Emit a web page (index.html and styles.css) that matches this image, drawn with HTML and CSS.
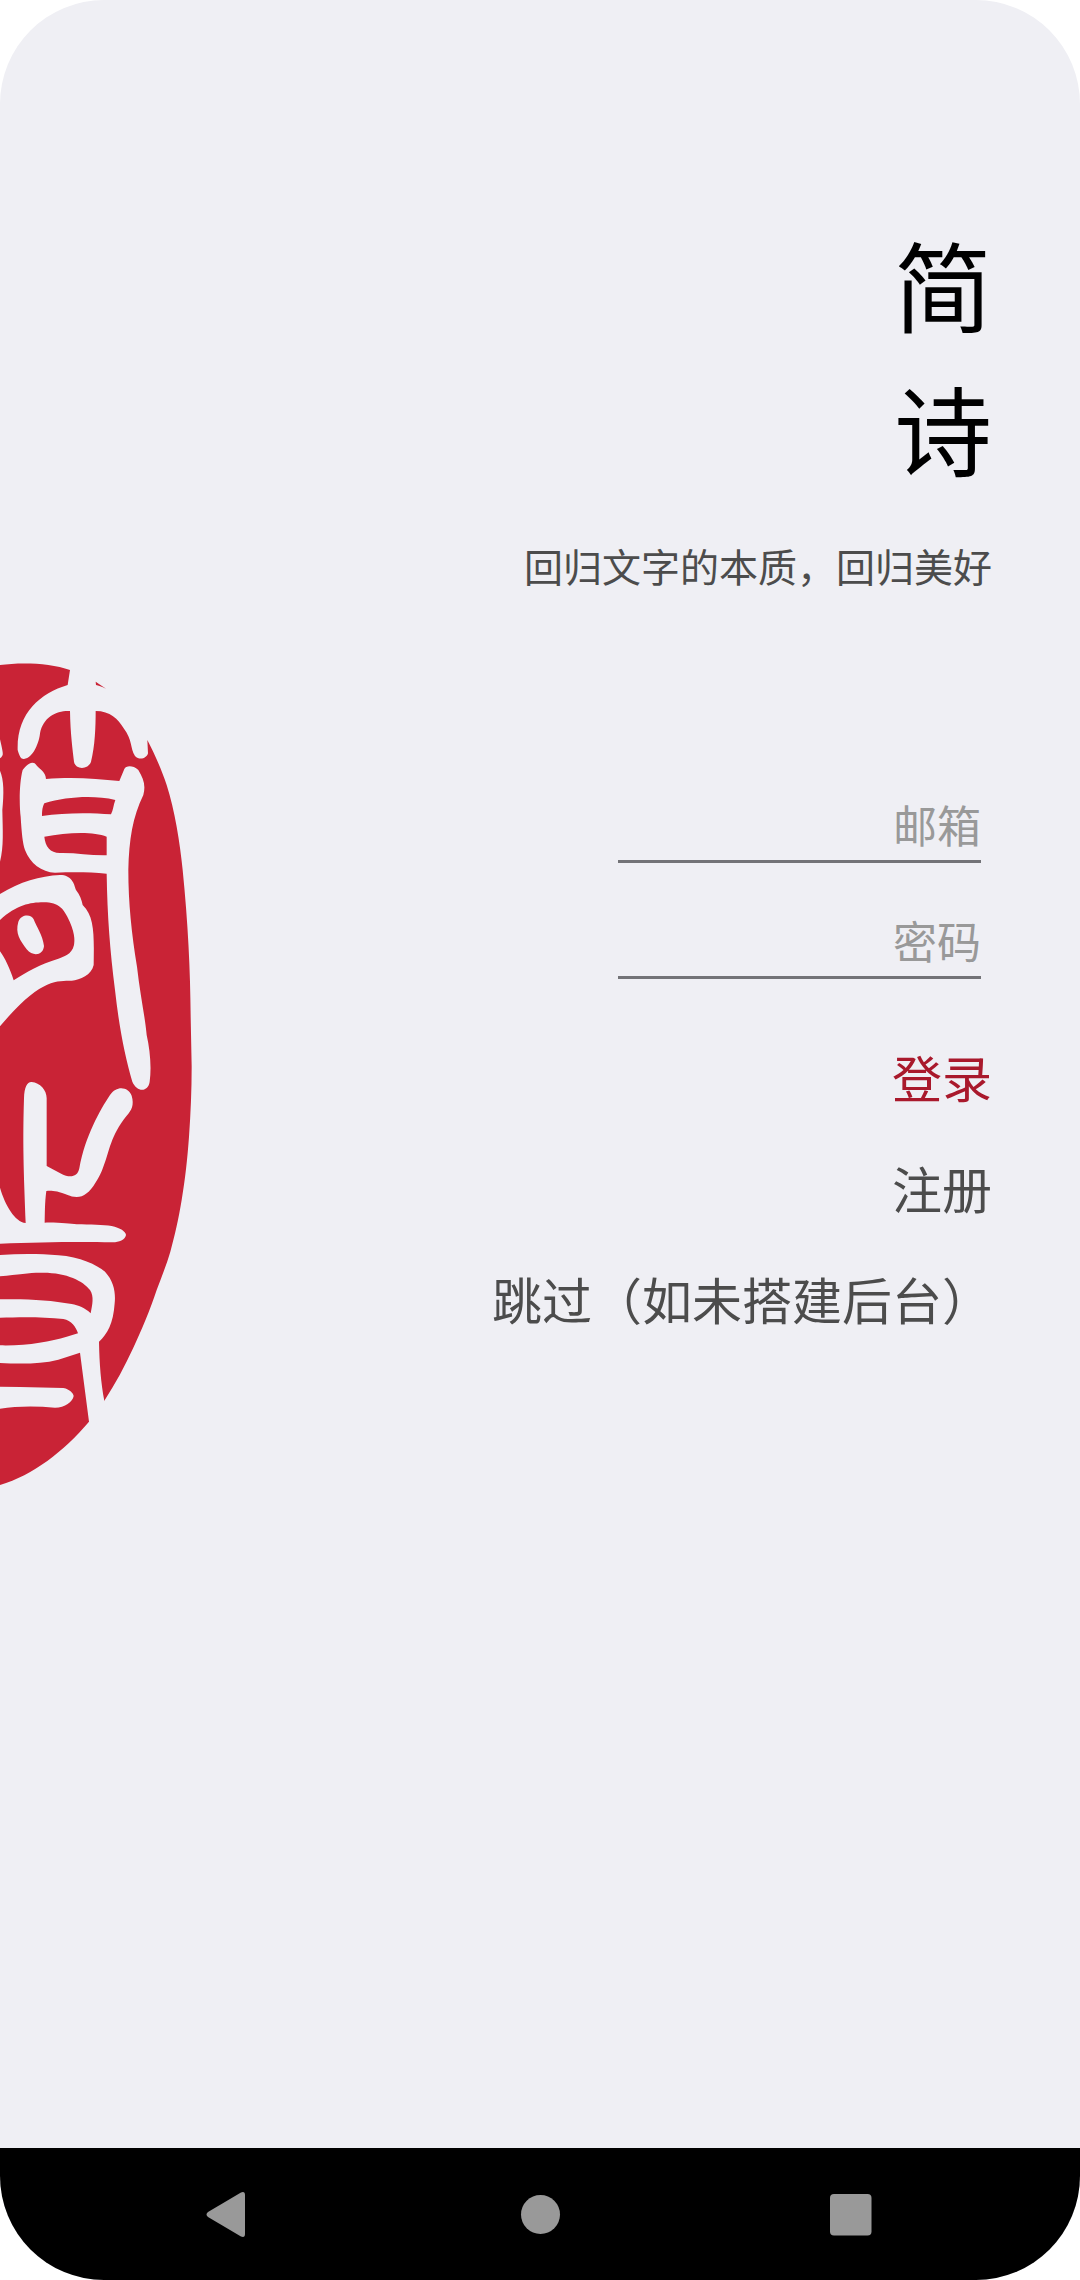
FILE: index.html
```
<!DOCTYPE html>
<html lang="zh-CN">
<head>
<meta charset="utf-8">
<meta name="viewport" content="width=device-width, initial-scale=1">
<title>简诗</title>
<link rel="stylesheet" href="styles.css">
</head>
<body>
<div class="screen">
  <main class="login">
    <svg class="seal" viewBox="0 0 600 2550" aria-hidden="true">
      <!-- oval body of the seal -->
      <path class="ink" d="M0 45C60 37 150 38 210 60L203 105C120 130 50 190 53 300C58 318 63 328 72 327C100 325 118 275 120 250C130 200 170 181 210 183C211 250 218 300 222 335C226 360 265 360 273 335C285 290 287 230 287 183C330 183 355 207 371 235C398 270 390 295 405 318C418 332 440 326 444 310L442 270C468 320 487 366 500 405C524 480 540 580 548 660C564 820 571 960 572 1100C573 1150 574 1200 575 1250C575 1320 572 1390 567 1460C562 1530 555 1590 545 1650C535 1710 525 1755 511 1805C501 1840 485 1880 470 1920C450 1980 425 2040 400 2093C375 2147 345 2203 313 2252L267 2315C190 2405 100 2475 0 2505Z"/>
      <path class="ink" d="M287 95L318 116C305 110 295 107 288 105Z"/>
      <!-- upper character -->
      <path class="paper" d="M0 268C5 290 10 310 8 315C5 322 3 322 0 325Z"/>
      <path class="paper" d="M0 362C12 390 12 430 7 480C8 540 12 590 0 635Z"/>
      <path class="paper" d="M138 387C137 365 115 355 107 343C97 333 85 340 68 360C57 400 58 470 62 500C65 550 68 580 75 600C90 640 125 667 165 668C220 666 270 666 320 671C322 800 330 900 345 1020C357 1130 375 1220 397 1295C412 1329 445 1325 449 1295C455 1250 450 1200 440 1155C435 1100 420 1030 411 950C395 850 385 760 385 660C387 570 398 500 430 435C438 405 430 385 415 360C398 345 378 347 373 357L358 393C290 385 210 380 138 387Z"/>
      <path class="ink" d="M133 460C200 440 280 435 346 450C340 465 340 480 333 493C270 488 190 488 126 498C126 480 128 470 133 460Z"/>
      <path class="ink" d="M133 560C200 547 280 543 320 560L320 616C270 617 230 608 180 609C150 608 136 590 133 560Z"/>
      <path class="paper" d="M0 732C60 695 120 678 180 675C215 675 222 700 228 720C240 735 245 750 248 765C285 800 282 860 281 945C275 975 240 990 215 992C170 993 120 985 0 1129Z"/>
      <path class="ink" d="M0 810C50 765 90 757 130 757C180 757 190 780 202 800C225 845 225 870 222 885C215 915 190 920 175 926C120 943 80 965 41 991C30 955 15 925 0 904Z"/>
      <path class="paper" d="M101 808C95 793 65 790 55 815C45 850 60 870 80 898C100 922 130 915 132 888C128 855 110 832 101 808Z"/>
      <!-- lower character -->
      <path class="paper" d="M0 1613C15 1665 45 1716 77 1719C73 1600 67 1500 72 1345C73 1310 82 1295 95 1296C120 1298 140 1320 140 1345L140 1548L185 1572C205 1582 232 1585 238 1555C255 1460 300 1380 330 1335C350 1305 385 1310 395 1337C403 1365 395 1380 380 1397C330 1460 330 1500 310 1550C300 1580 275 1620 260 1630C240 1648 215 1640 205 1636C170 1622 155 1622 139 1623C134 1660 135 1690 134 1718C180 1717 210 1722 230 1723C270 1724 310 1724 335 1728C360 1733 378 1745 378 1755C375 1770 355 1778 335 1777C250 1775 120 1776 0 1781Z"/>
      <path class="paper" d="M0 1815C60 1811 120 1811 175 1816C240 1820 290 1845 315 1865C343 1895 347 1930 344 1960C340 2020 322 2053 297 2075C298 2140 303 2200 313 2252L322 2300L270 2330L267 2315L240 2108L175 2129C120 2143 60 2142 0 2139Z"/>
      <path class="ink" d="M0 1879C60 1873 90 1867 130 1868C200 1868 250 1893 270 1920C283 1940 277 1965 272 1990C255 1973 235 1966 215 1962C150 1950 80 1946 0 1948Z"/>
      <path class="ink" d="M0 2003C60 2001 130 2000 190 2007C215 2012 227 2030 234 2050L200 2060C150 2075 80 2088 0 2086Z"/>
      <path class="paper" d="M0 2210L60 2211L190 2214C210 2218 220 2230 221 2238C218 2255 195 2273 165 2273C110 2268 50 2268 0 2276Z"/>
    </svg>
    <div class="panel">
      <h1 class="title"><span>简</span><span>诗</span></h1>
      <p class="slogan">回归文字的本质，回归美好</p>
      <form class="form">
        <input class="field" type="email" placeholder="邮箱" aria-label="邮箱">
        <input class="field" type="password" placeholder="密码" aria-label="密码">
        <div class="actions">
          <button class="action primary" type="button">登录</button>
          <button class="action" type="button">注册</button>
          <button class="action" type="button">跳过（如未搭建后台）</button>
        </div>
      </form>
    </div>
  </main>
  <nav class="navbar" aria-label="系统导航">
    <button class="key" type="button" aria-label="返回">
      <svg class="glyph" viewBox="0 0 48 48"><path d="M37 2.500Q41 1 41 5V44Q41 48 37 46.500L4 27Q1 24.500 4 22Z"/></svg>
    </button>
    <button class="key" type="button" aria-label="主页">
      <svg class="glyph" viewBox="0 0 48 48"><circle cx="24.500" cy="24.500" r="19.500"/></svg>
    </button>
    <button class="key" type="button" aria-label="最近任务">
      <svg class="glyph" viewBox="0 0 48 48"><rect x="2" y="4" width="41.500" height="41.500" rx="4"/></svg>
    </button>
  </nav>
</div>
</body>
</html>
```
FILE: styles.css
```
* {
  box-sizing: border-box;
}

body {
  margin: 0;
  background: #fff;
  font-family: "Noto Sans CJK SC", sans-serif;
  color: #4c4c4c;
}

.screen {
  display: flex;
  flex-direction: column;
  min-height: 100vh;
  border-radius: 104px;
  background: #efeff4;
  overflow: hidden;
}

.login {
  flex: 1;
  display: grid;
  grid-template-columns: 200px 1fr;
  align-items: start;
  padding: 210px 88px 0 0;
}

.seal {
  display: block;
  width: 200px;
  margin-top: 440px;
}

.ink {
  fill: #c92336;
}

.paper {
  fill: #efeff4;
}

.panel,
.form,
.actions {
  display: flex;
  flex-direction: column;
  align-items: flex-end;
}

.title {
  margin: 0;
  font-size: 98px;
  line-height: 144px;
  font-weight: 400;
  color: #000;
}

.title span {
  display: block;
}

.slogan {
  margin: 39px 0 0;
  font-size: 39px;
  line-height: 56px;
}

.form {
  gap: 36px;
  margin-top: 190px;
}

.field {
  width: 363px;
  height: 80px;
  margin: 0 11px 0 0;
  padding: 5px 0 0;
  border: 0;
  border-bottom: 3px solid #737377;
  border-radius: 0;
  outline: 0;
  background: transparent;
  font: inherit;
  font-size: 44px;
  text-align: right;
}

.field::placeholder {
  color: #999;
  opacity: 1;
}

.actions {
  margin-top: 6px;
}

.action {
  padding: 0;
  border: 0;
  background: none;
  font: inherit;
  font-size: 50px;
  line-height: 111px;
  color: inherit;
}

.primary {
  color: #a9192c;
}

.navbar {
  display: flex;
  justify-content: center;
  gap: 264px;
  height: 132px;
  background: #000;
}

.key {
  padding: 0;
  border: 0;
  background: none;
}

.glyph {
  display: block;
  width: 48px;
  height: 48px;
  fill: #999;
}
```
